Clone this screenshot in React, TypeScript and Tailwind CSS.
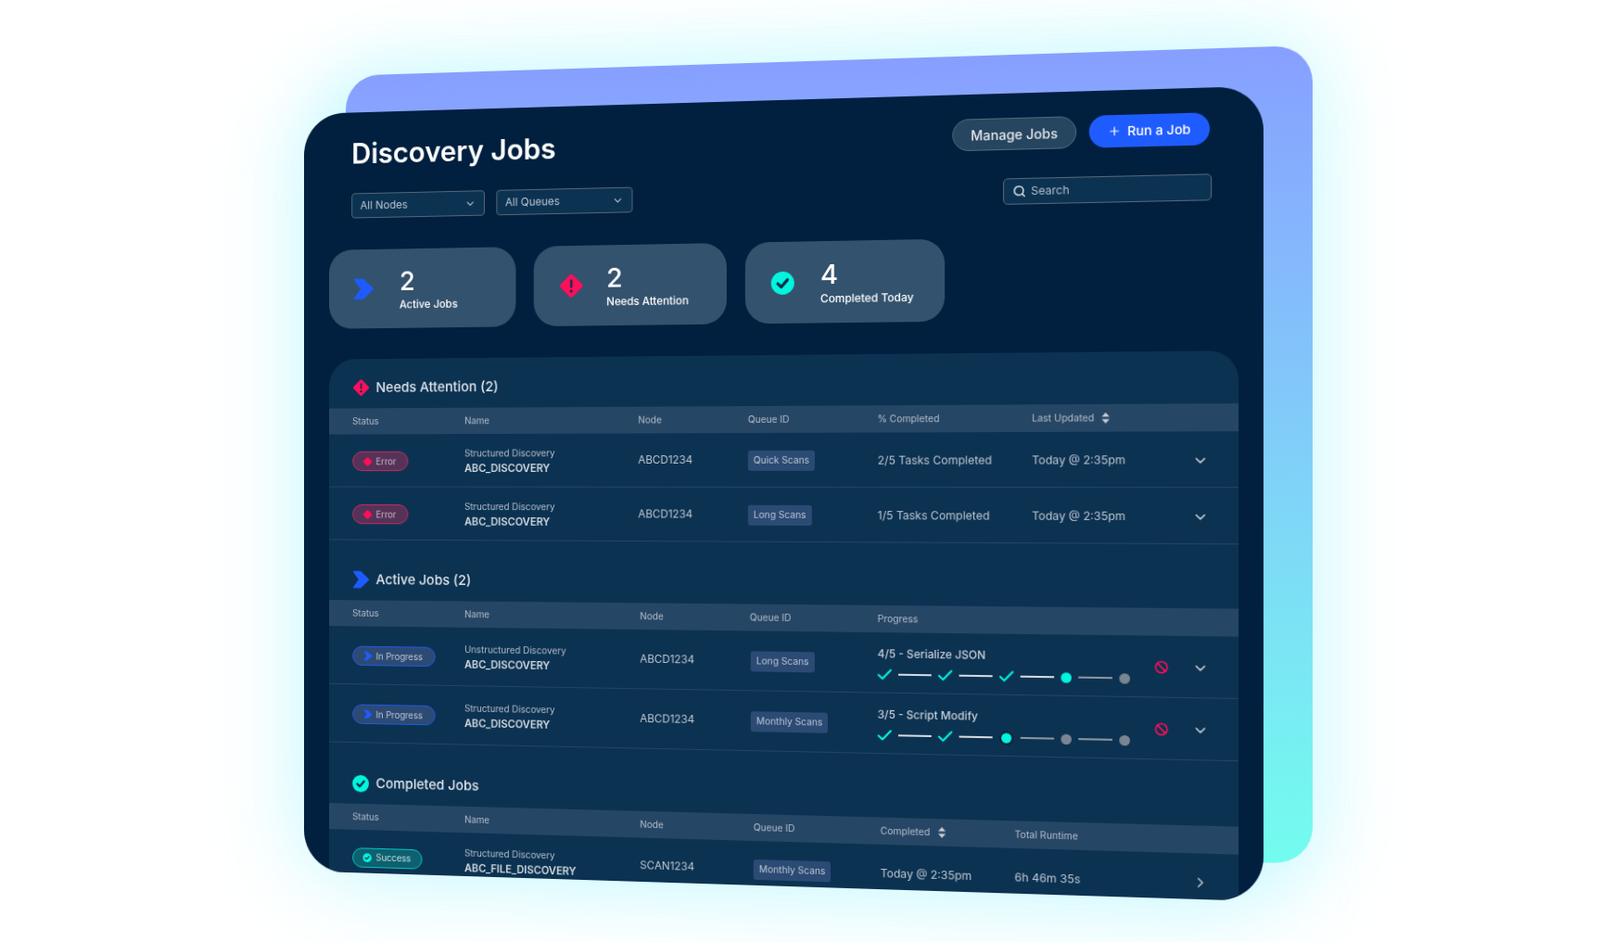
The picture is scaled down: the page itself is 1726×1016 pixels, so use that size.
import { Ban, ChevronDown, ChevronRight, Plus, Search } from "lucide-react";
import type { ReactNode } from "react";

const TEAL = "#00f5de";
const PINK = "#ff0e5b";
const BLUE = "#1f5cff";

function Chevron({ size, color = BLUE }: { size: number; color?: string }) {
  return (
    <svg width={size} height={size} viewBox="0 0 20 20" className="shrink-0">
      <path d="M1 1h8.5L19 10l-9.5 9H1l6.5-9z" fill={color} strokeLinejoin="round" stroke={color} strokeWidth="1" />
    </svg>
  );
}

function Alert({ size, mark = true }: { size: number; mark?: boolean }) {
  return (
    <svg width={size} height={size} viewBox="0 0 24 24" className="shrink-0">
      <rect x="3.75" y="3.75" width="16.5" height="16.5" rx="2" fill={PINK} transform="rotate(45 12 12)" />
      {mark && <rect x="10.9" y="6" width="2.2" height="8" rx="1" fill="#0c3252" />}
      {mark && <circle cx="12" cy="17" r="1.4" fill="#0c3252" />}
    </svg>
  );
}

function Done({ size }: { size: number }) {
  return (
    <svg width={size} height={size} viewBox="0 0 24 24" className="shrink-0">
      <circle cx="12" cy="12" r="12" fill={TEAL} />
      <path d="M7 12.5l3.5 3.5L17 8.5" fill="none" stroke="#062b48" strokeWidth="3" strokeLinecap="round" strokeLinejoin="round" />
    </svg>
  );
}

function Sort() {
  return (
    <svg width="8" height="13" viewBox="0 0 9 13" className="ml-2 shrink-0">
      <path d="M4.5 0L9 5H0zM4.5 13L0 8h9z" fill="#c4ccd4" />
    </svg>
  );
}

function Tick() {
  return (
    <svg width="15" height="12" viewBox="0 0 15 12" className="shrink-0">
      <path d="M1 6.5l4.2 4L14 1.2" fill="none" stroke={TEAL} strokeWidth="2" strokeLinecap="round" strokeLinejoin="round" />
    </svg>
  );
}

function Stat({ icon, value, label }: { icon: ReactNode; value: string; label: string }) {
  return (
    <div className="flex h-[88px] w-[213px] items-center rounded-[26px] bg-[#33526d] pl-[28px]">
      <div className="flex w-[53px] shrink-0 items-center">{icon}</div>
      <div className="text-white">
        <div className="text-[29px] leading-[34px] font-medium">{value}</div>
        <div className="mt-[1px] text-[11.8px] leading-[16px] font-medium">{label}</div>
      </div>
    </div>
  );
}

function Heading({ icon, title, top }: { icon: ReactNode; title: string; top: string }) {
  return (
    <div className={`flex h-[46px] items-center pl-[27px] text-[15px] font-medium text-[#dfe4e9] ${top}`}>
      <div className="flex w-[27px] items-center">{icon}</div>
      {title}
    </div>
  );
}

function Pill({ kind }: { kind: "error" | "active" | "success" }) {
  if (kind === "error") {
    return (
      <span className="flex h-[22px] w-[64px] items-center gap-[4px] rounded-full border-[1.5px] border-[#c62a5e] bg-[#563258] pl-[11px] text-[10px] text-[#c4bcc8]">
        <Alert size={11} mark={false} />
        Error
      </span>
    );
  }
  if (kind === "active") {
    return (
      <span className="flex h-[22px] w-[95px] items-center gap-[4px] rounded-full border-[1.5px] border-[#2059e0] bg-[#2c4a74] pl-[12px] text-[10px] text-[#c0c8d4]">
        <Chevron size={10} />
        In Progress
      </span>
    );
  }
  return (
    <span className="flex h-[22px] w-[80px] items-center gap-[5px] rounded-full border-[1.5px] border-[#00c9bc] bg-[#0e5f70] pl-[11px] text-[10px] text-[#c0e0e0]">
      <Done size={10} />
      Success
    </span>
  );
}

function Chip({ label }: { label: string }) {
  return (
    <span className="inline-flex h-[22px] items-center rounded-[3px] bg-[#2b4a74] px-[6px] text-[10.2px] text-[#bcc6d2]">{label}</span>
  );
}

function NameCell({ kind, id }: { kind: string; id: string }) {
  return (
    <div>
      <div className="text-[10.2px] leading-[15px] text-[#b4bec9]">{kind}</div>
      <div className="mt-[2px] text-[11.5px] leading-[15px] font-semibold text-[#d4dae0]">{id}</div>
    </div>
  );
}

function Track({ done, ring }: { done: number; ring: boolean }) {
  const steps = [0, 1, 2, 3, 4];
  return (
    <div className="mt-[8px] flex items-center gap-[7px]">
      {steps.map((i) => (
        <div key={i} className="flex items-center gap-[7px]">
          {i < done && <Tick />}
          {i === done && (
            <span className={`h-[11px] w-[11px] shrink-0 rounded-full bg-[#00f5de] ${ring ? "mx-[2px] outline-2 outline-[#0a2036]" : ""}`} />
          )}
          {i > done && <span className="h-[11px] w-[11px] shrink-0 rounded-full bg-[#7b8592]" />}
          {i < 4 && <span className={`w-[35px] ${i < done ? "h-[2px] bg-[#d5dade]" : "h-[1.5px] bg-[#8b95a0]"}`} />}
        </div>
      ))}
    </div>
  );
}

const HEAD_CLASS = "grid h-[29px] items-center bg-[#264666] pl-[27px] text-[10.2px] text-[#b3bdc8]";
const ROW_CLASS = "grid items-center pt-[2px] pl-[27px] text-[12px] text-[#bcc5cf]";
const LINE = "border-b border-[#21456a]";

const ATT_COLS = "grid-cols-[128px_194px_120px_139px_162px_1fr_47px]";
const ACT_COLS = "grid-cols-[128px_196px_120px_137px_283px_1fr_47px]";
const DONE_COLS = "grid-cols-[128px_196px_124px_136px_141px_1fr_47px]";

const ATTENTION = [
  { queue: "Quick Scans", tasks: "2/5 Tasks Completed" },
  { queue: "Long Scans", tasks: "1/5 Tasks Completed" },
];

const ACTIVE = [
  { kind: "Unstructured Discovery", queue: "Long Scans", title: "4/5 - Serialize JSON", done: 3, ring: false },
  { kind: "Structured Discovery", queue: "Monthly Scans", title: "3/5 - Script Modify", done: 2, ring: true },
];

export default function App() {
  return (
    <div className="grid h-[1016px] w-[1726px] overflow-hidden bg-white font-['Inter',sans-serif]">
      {/* glow of the front panel, kept under the back card */}
      <div className="col-start-1 row-start-1 h-[848px] w-[1035px] origin-top-left rounded-[46px] shadow-[0_0_90px_15px_rgba(120,240,255,0.3)] [transform:matrix3d(0.90567,-0.035691,0,-0.000069208,0,0.96285,0,0,0,0,1,0,328,123,0,1)]" />

      {/* back card */}
      <div className="col-start-1 row-start-1 h-[850px] w-[1043px] origin-top-left rounded-[38px] bg-gradient-to-b from-[#879fff] to-[#72fdee] shadow-[0_0_80px_15px_rgba(120,240,255,0.28)] [transform:matrix3d(0.89871,-0.035034,0,-0.000071539,0,0.96153,0,0,0,0,1,0,373,81.7,0,1)]" />

      {/* front panel */}
      <div className="col-start-1 row-start-1 flex h-[848px] w-[1035px] origin-top-left flex-col overflow-hidden rounded-[46px] bg-[#011f3e] blur-[0.5px] [transform:matrix3d(0.90567,-0.035691,0,-0.000069208,0,0.96285,0,0,0,0,1,0,328,123,0,1)]">
        <div className="flex h-[65px] shrink-0 items-start justify-between pt-[26px] pr-[54px] pl-[55px]">
          <h1 className="mt-[2px] text-[31px] leading-[36px] font-semibold text-white">Discovery Jobs</h1>
          <div className="flex gap-[13px]">
            <button className="h-[34px] w-[129px] rounded-full border border-[#55697d] bg-[#26455f] text-[14px] font-medium text-[#e3e7eb]">Manage Jobs</button>
            <button className="flex h-[34px] w-[123px] items-center justify-center gap-[6px] rounded-full bg-[#1f5cff] text-[13.6px] font-medium text-white">
              <Plus size={14} />
              Run a Job
            </button>
          </div>
        </div>

        <div className="mt-[25px] flex h-[28px] shrink-0 justify-between pr-[52px] pl-[55px]">
          <div className="flex gap-[13px]">
            {["All Nodes", "All Queues"].map((label) => (
              <div key={label} className="flex w-[152px] items-center justify-between rounded-[4px] border border-[#56687a] bg-[#0c3252] px-[9px] text-[12px] text-[#bcc5cf]">
                {label}
                <ChevronDown size={13} />
              </div>
            ))}
          </div>
          <div className="flex w-[214px] items-center gap-[5px] rounded-[5px] border border-[#56687a] bg-[#0c3252] pl-[9px] text-[12px] text-[#b4bec9]">
            <Search size={14} strokeWidth={2.5} color="#e0e4e8" />
            Search
          </div>
        </div>

        <div className="mt-[35px] flex shrink-0 gap-[20px] pl-[29px]">
          <Stat icon={<Chevron size={24} />} value="2" label="Active Jobs" />
          <Stat icon={<Alert size={28} />} value="2" label="Needs Attention" />
          <Stat icon={<Done size={25} />} value="4" label="Completed Today" />
        </div>

        <div className="mt-[34px] mr-[25px] ml-[29px] flex-1 rounded-t-[30px] bg-[#0c3252]">
          <Heading icon={<Alert size={20} />} title="Needs Attention (2)" top="mt-[9px]" />
          <div className={`${HEAD_CLASS} ${ATT_COLS}`}>
            <span>Status</span>
            <span>Name</span>
            <span>Node</span>
            <span>Queue ID</span>
            <span>% Completed</span>
            <span className="flex items-center">Last Updated<Sort /></span>
          </div>
          {ATTENTION.map((row) => (
            <div key={row.queue} className={`${ROW_CLASS} ${LINE} ${ATT_COLS} h-[59px]`}>
              <Pill kind="error" />
              <NameCell kind="Structured Discovery" id="ABC_DISCOVERY" />
              <span className="text-[11.8px]">ABCD1234</span>
              <div><Chip label={row.queue} /></div>
              <span>{row.tasks}</span>
              <span>Today @ 2:35pm</span>
              <ChevronDown size={17} />
            </div>
          ))}

          <Heading icon={<Chevron size={20} />} title="Active Jobs (2)" top="mt-[21px]" />
          <div className={`${HEAD_CLASS} ${ACT_COLS}`}>
            <span>Status</span>
            <span>Name</span>
            <span>Node</span>
            <span>Queue ID</span>
            <span>Progress</span>
          </div>
          {ACTIVE.map((row) => (
            <div key={row.title} className={`${ROW_CLASS} ${LINE} ${ACT_COLS} h-[65px]`}>
              <Pill kind="active" />
              <NameCell kind={row.kind} id="ABC_DISCOVERY" />
              <span className="text-[11.8px]">ABCD1234</span>
              <div className="ml-[1px]"><Chip label={row.queue} /></div>
              <div>
                <div className="text-[11.7px] leading-[16px] font-medium text-[#c8cfd6]">{row.title}</div>
                <Track done={row.done} ring={row.ring} />
              </div>
              <Ban size={14} strokeWidth={2.5} color={PINK} className="ml-[5px]" />
              <ChevronDown size={17} />
            </div>
          ))}

          <Heading icon={<Done size={19} />} title="Completed Jobs" top="mt-[22px]" />
          <div className={`${HEAD_CLASS} ${DONE_COLS}`}>
            <span>Status</span>
            <span>Name</span>
            <span>Node</span>
            <span>Queue ID</span>
            <span className="flex items-center">Completed<Sort /></span>
            <span>Total Runtime</span>
          </div>
          <div className={`${ROW_CLASS} ${DONE_COLS} h-[59px]`}>
            <Pill kind="success" />
            <NameCell kind="Structured Discovery" id="ABC_FILE_DISCOVERY" />
            <span className="text-[11.8px]">SCAN1234</span>
            <div><Chip label="Monthly Scans" /></div>
            <span>Today @ 2:35pm</span>
            <span>6h 46m 35s</span>
            <ChevronRight size={17} />
          </div>
        </div>
      </div>
    </div>
  );
}
